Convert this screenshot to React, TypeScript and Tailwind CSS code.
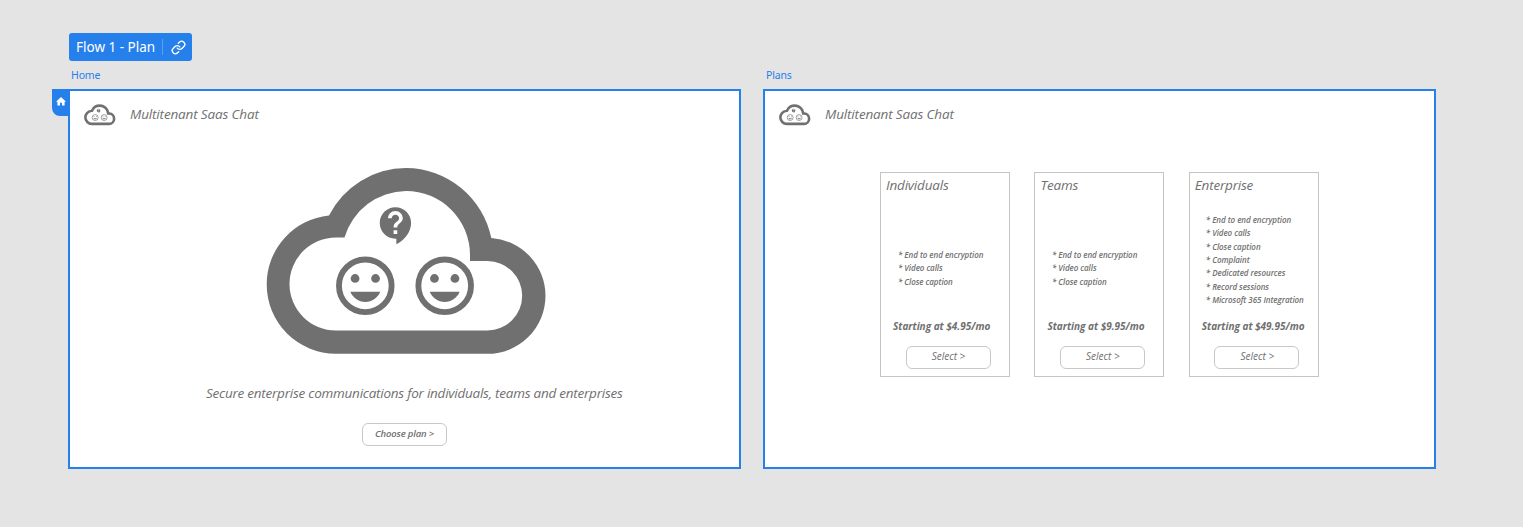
import type { ReactNode } from "react";

const FACE_MOUTH = "M12 17.5c2.33 0 4.31-1.46 5.11-3.5H6.89c.8 2.04 2.78 3.5 5.11 3.5z";
const QUESTION =
  "M11.5 2C6.81 2 3 5.81 3 10.5S6.81 19 11.5 19h.5v3c4.86-2.34 8-7 8-11.5C20 5.81 16.19 2 11.5 2zm1 14.5h-2v-2h2v2zm0-3.5h-2c0-3.25 3-3 3-5 0-1.1-.9-2-2-2s-2 .9-2 2h-2c0-2.21 1.79-4 4-4s4 1.79 4 4c0 2.5-3 2.75-3 5z";

function Face({ x }: { x: number }) {
  return (
    <g transform={`translate(${x} 250.7) scale(2.925)`}>
      <circle cx="12" cy="12" r="9" fill="none" stroke="#707070" strokeWidth="2" />
      <circle cx="8.5" cy="9.5" r="1.5" />
      <circle cx="15.5" cy="9.5" r="1.5" />
      <path d={FACE_MOUTH} />
    </g>
  );
}

function CloudLogo({ className }: { className: string }) {
  return (
    <svg viewBox="266 167 280 187" className={`overflow-visible ${className}`} fill="#707070" aria-hidden="true">
      <path
        fillRule="evenodd"
        d="M329 215.5A86.5 86.5 0 0 1 406 168A87.5 87.5 0 0 1 491.3 238.1A58 58 0 0 1 545.5 295.8A58 58 0 0 1 487.5 353.8H336A69.3 69.3 0 0 1 266.7 284.5A69.3 69.3 0 0 1 329 215.5ZM344.5 237.5H336A46.5 46.5 0 0 0 336 330.5H487.5A34.7 34.7 0 0 0 487.5 261.1H470V255A64 64 0 0 0 406 191A64.5 64.5 0 0 0 344.5 237.5Z"
      />
      <path transform="translate(374.2 203.6) scale(1.845)" d={QUESTION} />
      <Face x={330.2} />
      <Face x={409.6} />
    </svg>
  );
}

function Artboard({ label, children, home }: { label: string; children: ReactNode; home?: boolean }) {
  return (
    <section className="w-[673px]">
      <h2 className="h-[28px] pl-[3px] pt-[6px] font-['Noto_Sans',sans-serif] text-[10.5px] not-italic leading-4 tracking-[-0.15px] text-[#2680eb]">
        {label}
      </h2>
      <div className="relative h-[380px] border-2 border-[#2680eb] bg-white">
        {home && (
          <div className="absolute -left-[18px] -top-[2px] flex h-[27px] w-[17px] items-center justify-center rounded-bl-lg bg-[#2680eb] pb-[3px] pl-px">
            <svg viewBox="0 0 10 9" className="h-[9px] w-[10px]" fill="white">
              <path d="M5 0L0 4.7H1.4V8.6H4V5.8H6V8.6H8.6V4.7H10Z" />
            </svg>
          </div>
        )}
        <header className="flex h-[47px] items-center pl-[14px]">
          <CloudLogo className="h-[21.4px] w-[31.5px]" />
          <span className="ml-[14.5px] pb-px text-[13.5px] tracking-[-0.15px]">Multitenant Saas Chat</span>
        </header>
        {children}
      </div>
    </section>
  );
}

function PillButton({ children, className }: { children: ReactNode; className: string }) {
  return (
    <button
      className={`flex h-[23px] w-[85px] items-center justify-center rounded-[6px] border border-[#c8c8c8] bg-white italic ${className}`}
    >
      {children}
    </button>
  );
}

const basics = ["End to end encryption", "Video calls", "Close caption"];
const plans = [
  { name: "Individuals", price: "$4.95", features: basics, list: "pl-[17px] pt-[50px]" },
  { name: "Teams", price: "$9.95", features: basics, list: "pl-[16.5px] pt-[50px]" },
  {
    name: "Enterprise",
    price: "$49.95",
    features: [...basics, "Complaint", "Dedicated resources", "Record sessions", "Microsoft 365 Integration"],
    list: "pl-[16px] pt-[15px]",
  },
];

export default function App() {
  return (
    <main className="h-[527px] w-[1523px] overflow-hidden bg-[#e4e4e4] pl-[68px] pt-[33px] font-['Open_Sans',sans-serif] text-[#707070]">
      <div className="ml-px flex h-7 w-[123px] items-center rounded-[3px] bg-[#2680eb] pl-[7px] font-['Noto_Sans',sans-serif] text-white">
        <span className="w-[86px] whitespace-nowrap pt-px text-[13.5px]">Flow 1 - Plan</span>
        <span className="h-4 w-px bg-[#5b9ff0]" />
        <svg viewBox="0 0 24 24" className="ml-[8px] size-[15px]" fill="none" stroke="white" strokeWidth="2.2" strokeLinecap="round" strokeLinejoin="round">
          <path d="M10 13a5 5 0 0 0 7.54.54l3-3a5 5 0 0 0-7.07-7.07l-1.72 1.71" />
          <path d="M14 11a5 5 0 0 0-7.54-.54l-3 3a5 5 0 0 0 7.07 7.07l1.71-1.71" />
        </svg>
      </div>
      <div className="flex gap-[22px] italic">
        <Artboard label="Home" home>
          <CloudLogo className="ml-[196px] mt-[29px] h-[187px] w-[280px]" />
          <p className="ml-[136px] mt-[29px] h-5 whitespace-nowrap text-[13.5px] leading-5 tracking-[-0.24px]">
            Secure enterprise communications for individuals, teams and enterprises
          </p>
          <PillButton className="ml-[292px] mt-[20px] text-[9.5px] font-semibold tracking-[-0.15px]">Choose plan &gt;</PillButton>
        </Artboard>
        <Artboard label="Plans">
          <div className="ml-[115px] mt-[34px] flex gap-[24.4px]">
            {plans.map((plan) => (
              <article key={plan.name} className="flex h-[205px] w-[130px] shrink-0 flex-col border border-[#c4c4c4]">
                <h3 className="h-[25px] pl-[5px] text-[13.5px] leading-[24px] tracking-[-0.2px]">{plan.name}</h3>
                <ul className={`h-[118px] ${plan.list} text-[8px] font-semibold leading-[13.35px] tracking-[-0.05px]`}>
                  {plan.features.map((feature) => (
                    <li key={feature} className="whitespace-nowrap">* {feature}</li>
                  ))}
                </ul>
                <p className="h-[30px] whitespace-nowrap pl-[12px] text-[10px] font-bold leading-5">Starting at {plan.price}/mo</p>
                <PillButton className="ml-[24.5px] pb-[2px] pl-px text-[10px]">Select &gt;</PillButton>
              </article>
            ))}
          </div>
        </Artboard>
      </div>
    </main>
  );
}
